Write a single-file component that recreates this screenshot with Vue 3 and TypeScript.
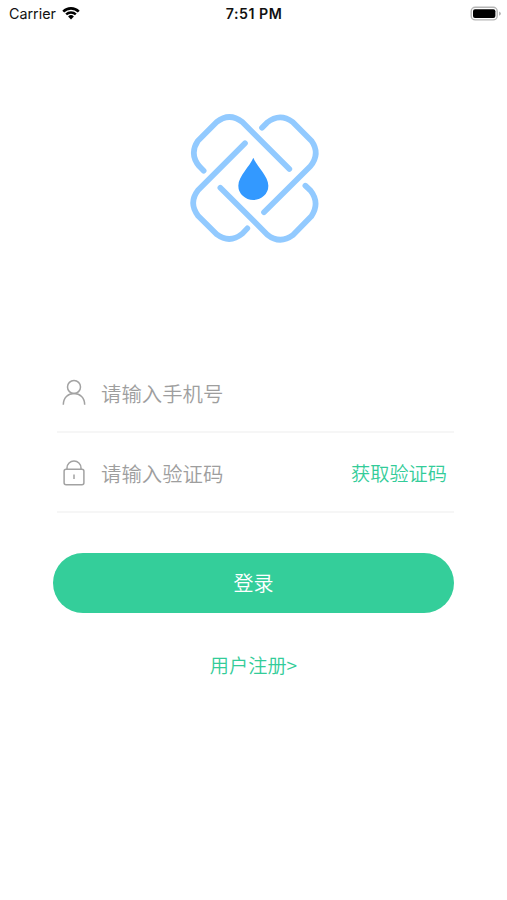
<script setup lang="ts">
import { ref } from 'vue'

const phone = ref<string>('')
const code = ref<string>('')
</script>

<template>
  <main class="screen">
    <header class="status">
      <div class="carrier">
        <span class="carrier-name">Carrier</span>
        <svg class="wifi" viewBox="0 0 18 14">
          <path d="M.3 4.7A12.3 12.3 0 0 1 17.7 4.7L15.8 6.5A9.8 9.8 0 0 0 2.2 6.5Z" />
          <path d="M3.3 7.6A8.3 8.3 0 0 1 14.7 7.6L13 9.3A5.8 5.8 0 0 0 5 9.3Z" />
          <path d="M6.1 10.5A4.2 4.2 0 0 1 11.9 10.5L9 13.4Z" />
        </svg>
      </div>
      <time class="time">7:51 PM</time>
      <svg class="battery" viewBox="0 0 32 16">
        <rect x="1.2" y="1.3" width="26" height="12.6" rx="4" fill="#fff" stroke="#b5b5b5" stroke-width="1.4" />
        <rect x="3" y="3.2" width="22.4" height="8.8" rx="2" fill="#000" />
        <path d="M29 5.4Q31 6.2 31 7.6T29 9.8Z" fill="#b5b5b5" />
      </svg>
    </header>

    <svg class="logo" viewBox="0 0 450 450">
      <g fill="none" stroke="#92caff" stroke-width="17" stroke-linecap="round" stroke-linejoin="round">
        <path d="M71 197L58 184Q27 147 54 107L110 51Q148 21 187 51L328 192" />
        <path d="M246 68L261 53Q299 22 338 51L394 107Q422 146 391 184L252 322" />
        <path d="M195 115L54 256Q25 294 54 332L110 388Q149 417 187 386L202 370" />
        <path d="M121 248L262 389Q300 419 339 390L394 334Q421 294 391 256L376 242" />
      </g>
      <path d="M220 158C229 182 265 213 265 242A45 43 0 0 1 175 242C175 213 211 182 220 158Z" fill="#3399ff" />
    </svg>

    <form class="form" @submit.prevent>
      <label class="field">
        <svg class="icon" viewBox="0 0 26 28">
          <circle cx="13" cy="8" r="6.5" />
          <path d="M2.3 25.8C2.3 19 7 14.5 13 14.5S23.7 19 23.7 25.8" />
        </svg>
        <input v-model="phone" class="input" type="tel" placeholder="请输入手机号" />
      </label>
      <div class="field">
        <svg class="icon" viewBox="0 0 26 28">
          <rect x="3.1" y="10.2" width="19.8" height="15.6" rx="2" />
          <path d="M6 10V9C6 4.8 9.2 2 13 2S20 4.8 20 9V10M13 15.5V20" />
        </svg>
        <input v-model="code" class="input" type="text" placeholder="请输入验证码" />
        <button class="get-code" type="button">获取验证码</button>
      </div>
      <button class="login" type="submit">登录</button>
    </form>
    <a class="register">用户注册&gt;</a>
  </main>
</template>

<style>
body {
  margin: 0;
  background: #fff;
}
</style>

<style scoped>
.screen {
  box-sizing: border-box;
  width: 100%;
  height: 900px;
  display: flex;
  flex-direction: column;
  align-items: center;
  background: #fff;
  font-family: "Noto Sans CJK SC", sans-serif;
}
.status {
  box-sizing: border-box;
  width: 100%;
  height: 27px;
  padding: 0 5px 0 9px;
  display: grid;
  grid-template-columns: 1fr auto 1fr;
  align-items: center;
  font-family: Inter, sans-serif;
  color: #111;
}
.carrier {
  display: flex;
  align-items: center;
  gap: 6px;
}
.carrier-name {
  font-size: 14.3px;
  line-height: 27px;
}
.wifi {
  width: 18px;
  height: 14px;
  margin-top: -2px;
  fill: #000;
}
.time {
  font-size: 14.2px;
  line-height: 27px;
  font-weight: 600;
  letter-spacing: 0.5px;
  margin-right: 3px;
}
.battery {
  width: 32px;
  height: 16px;
  justify-self: end;
}
.logo {
  width: 150px;
  height: 150px;
  margin: 78px 0 0 3px;
}
.form {
  width: 401px;
  margin-top: 98px;
  display: flex;
  flex-direction: column;
}
.field {
  box-sizing: border-box;
  height: 80px;
  margin: 0 0 0 4px;
  padding: 1px 7px 0 4px;
  display: flex;
  align-items: center;
  border-bottom: 2px solid #f6f6f6;
}
.icon {
  flex: none;
  width: 26px;
  height: 28px;
  fill: none;
  stroke: #a2a2a2;
  stroke-width: 1.5;
}
.input {
  flex: 1;
  min-width: 0;
  height: 40px;
  margin-left: 14px;
  padding: 0;
  border: 0;
  outline: 0;
  background: transparent;
  font: 350 20.4px "Noto Sans CJK SC", sans-serif;
  color: #333;
}
.input::placeholder {
  color: #9e9e9e;
  opacity: 1;
}
.get-code {
  padding: 0;
  border: 0;
  background: none;
  font: 350 19.2px "Noto Sans CJK SC", sans-serif;
  color: #33cc99;
}
.login {
  height: 60px;
  margin-top: 40px;
  padding: 0;
  border: 0;
  border-radius: 30px;
  background: #34ce9a;
  color: #fff;
  font: 350 20px/60px "Noto Sans CJK SC", sans-serif;
}
.register {
  margin-top: 36px;
  font-size: 19.2px;
  font-weight: 350;
  line-height: 32px;
  color: #33cc99;
}
</style>
